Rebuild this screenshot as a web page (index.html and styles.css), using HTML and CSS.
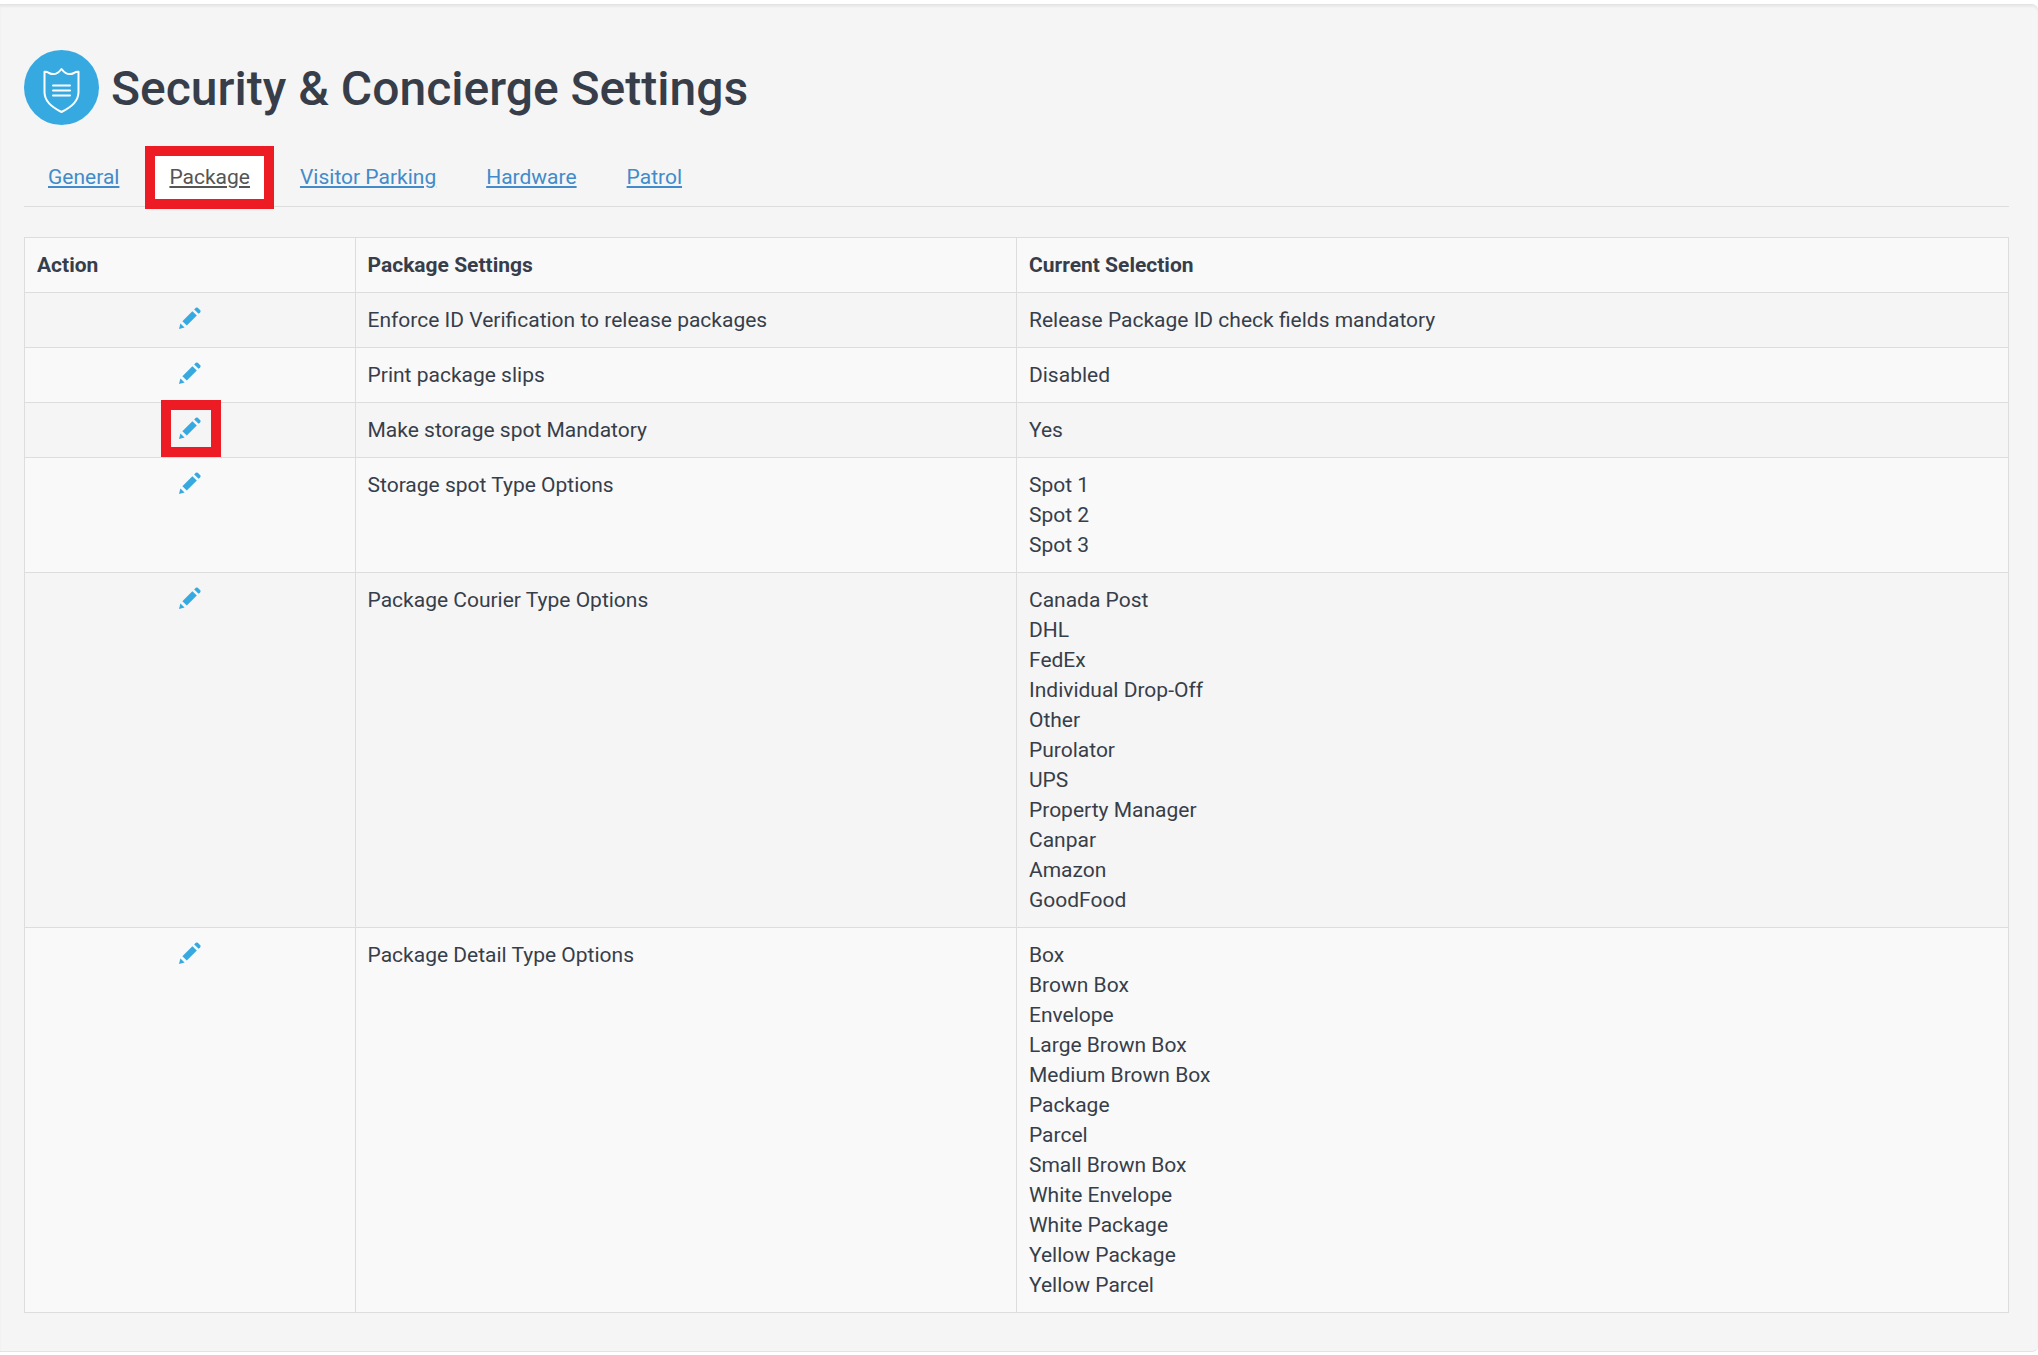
FILE: index.html
```html
<!DOCTYPE html>
<html lang="en">
<head>
  <meta charset="UTF-8">
  <meta name="viewport" content="width=device-width, initial-scale=1">
  <title>Security &amp; Concierge Settings</title>
  <link rel="stylesheet" href="styles.css">
</head>
<body>
  <svg class="symbols" aria-hidden="true">
    <symbol id="pencil" viewBox="0 0 22 22">
      <path d="M0 22 L1.4 16.4 L5.6 20.6 Z"/>
      <path d="M3.4 14.2 L13.4 4.2 L17.8 8.6 L7.8 18.6 Z"/>
      <path d="M15.2 2.4 L16.8 0.8 Q17.8 0 18.8 0.8 L21.2 3.2 Q22 4.2 21.2 5.2 L19.6 6.8 Z"/>
    </symbol>
  </svg>

  <main class="panel">
    <header class="page-header">
      <svg class="page-icon" viewBox="0 0 75 75" aria-hidden="true">
        <circle cx="37.5" cy="37.5" r="37.5" fill="#37a9e1"/>
        <g fill="none" stroke="#fff" stroke-width="2" stroke-linecap="round" stroke-linejoin="round">
          <path d="M37.5 19 C34.5 23 30 25.5 25 23 C24 22.3 22.5 21.5 20.5 21.8 V42 C20.5 51 27 56.5 37.5 62 C48 56.5 54.5 51 54.5 42 V21.8 C52.5 21.5 51 22.3 50 23 C45 25.5 40.5 23 37.5 19 Z"/>
          <path d="M29 35.5 H46 M29 40.5 H46 M29 45.5 H46"/>
        </g>
      </svg>
      <h1>Security &amp; Concierge Settings</h1>
    </header>

    <nav>
      <ul class="tabs">
        <li><a href="#general">General</a></li>
        <li><a href="#package" class="active" aria-current="page">Package</a></li>
        <li><a href="#visitor-parking">Visitor Parking</a></li>
        <li><a href="#hardware">Hardware</a></li>
        <li><a href="#patrol">Patrol</a></li>
      </ul>
    </nav>

    <table class="settings-table">
      <thead>
        <tr>
          <th class="col-action">Action</th>
          <th class="col-setting">Package Settings</th>
          <th class="col-selection">Current Selection</th>
        </tr>
      </thead>
      <tbody>
        <tr>
          <td><button type="button" class="edit-btn" aria-label="Edit"><svg><use href="#pencil"/></svg></button></td>
          <td>Enforce ID Verification to release packages</td>
          <td>Release Package ID check fields mandatory</td>
        </tr>
        <tr>
          <td><button type="button" class="edit-btn" aria-label="Edit"><svg><use href="#pencil"/></svg></button></td>
          <td>Print package slips</td>
          <td>Disabled</td>
        </tr>
        <tr>
          <td><button type="button" class="edit-btn highlight" aria-label="Edit"><svg><use href="#pencil"/></svg></button></td>
          <td>Make storage spot Mandatory</td>
          <td>Yes</td>
        </tr>
        <tr>
          <td><button type="button" class="edit-btn" aria-label="Edit"><svg><use href="#pencil"/></svg></button></td>
          <td>Storage spot Type Options</td>
          <td>
            Spot 1<br>
            Spot 2<br>
            Spot 3
          </td>
        </tr>
        <tr>
          <td><button type="button" class="edit-btn" aria-label="Edit"><svg><use href="#pencil"/></svg></button></td>
          <td>Package Courier Type Options</td>
          <td>
            Canada Post<br>
            DHL<br>
            FedEx<br>
            Individual Drop-Off<br>
            Other<br>
            Purolator<br>
            UPS<br>
            Property Manager<br>
            Canpar<br>
            Amazon<br>
            GoodFood
          </td>
        </tr>
        <tr>
          <td><button type="button" class="edit-btn" aria-label="Edit"><svg><use href="#pencil"/></svg></button></td>
          <td>Package Detail Type Options</td>
          <td>
            Box<br>
            Brown Box<br>
            Envelope<br>
            Large Brown Box<br>
            Medium Brown Box<br>
            Package<br>
            Parcel<br>
            Small Brown Box<br>
            White Envelope<br>
            White Package<br>
            Yellow Package<br>
            Yellow Parcel
          </td>
        </tr>
      </tbody>
    </table>
  </main>
</body>
</html>
```

FILE: styles.css
```css
* {
  box-sizing: border-box;
}

body {
  margin: 0;
  padding: 4px 0 3px;
  background-color: #fff;
  color: #373e4a;
  font-family: Roboto, "Liberation Sans", sans-serif;
  font-size: 21px;
  line-height: 30px;
}

.symbols {
  position: absolute;
  width: 0;
  height: 0;
}

.panel {
  padding: 45px 29px 38px 24px;
  background-color: #f5f5f5;
  border: 1px solid #e3e3e3;
  border-width: 1px 0;
  border-radius: 0 6px 6px 0;
  box-shadow: inset 0 2px 2px rgba(0, 0, 0, 0.05);
}

.page-header {
  display: flex;
  align-items: center;
  gap: 12px;
  margin-bottom: 21px;
}
.page-icon {
  flex: none;
  width: 75px;
  height: 75px;
}
h1 {
  margin: 0;
  padding-top: 2px;
  font-size: 48px;
  font-weight: 500;
  line-height: 54px;
}

.tabs {
  display: flex;
  gap: 2px;
  margin: 0 0 30px;
  padding: 0;
  height: 61px;
  list-style: none;
  border-bottom: 1px solid #ddd;
}
.tabs a {
  display: block;
  padding: 16px 24px 17px;
  color: #428bca;
  text-decoration: underline;
}
.tabs a.active {
  padding: 6px 14px 7px;
  border: 10px solid #ed1c24;
  background-color: #fff;
  color: #555;
}

.settings-table {
  width: 100%;
  table-layout: fixed;
  border-collapse: collapse;
}
.settings-table th,
.settings-table td {
  padding: 12px;
  border: 1px solid #ddd;
  text-align: left;
  vertical-align: top;
}
.settings-table th {
  font-weight: 700;
}
.settings-table tr {
  background-color: #f9f9f9;
}
.settings-table tbody tr:nth-child(odd) {
  background-color: #f5f5f5;
}
.col-action {
  width: 16.66%;
}
.col-setting {
  width: 33.34%;
}
.col-selection {
  width: 50%;
}

.edit-btn {
  position: relative;
  display: block;
  width: 40px;
  height: 30px;
  margin: 0 auto;
  padding: 2px 9px 6px;
  border: none;
  background: none;
  cursor: pointer;
}
.edit-btn svg {
  display: block;
  width: 22px;
  height: 22px;
  fill: #37a9e1;
}
.edit-btn.highlight::after {
  content: "";
  position: absolute;
  inset: -15px -11px -12px -9px;
  border: 10px solid #ed1c24;
}
```
